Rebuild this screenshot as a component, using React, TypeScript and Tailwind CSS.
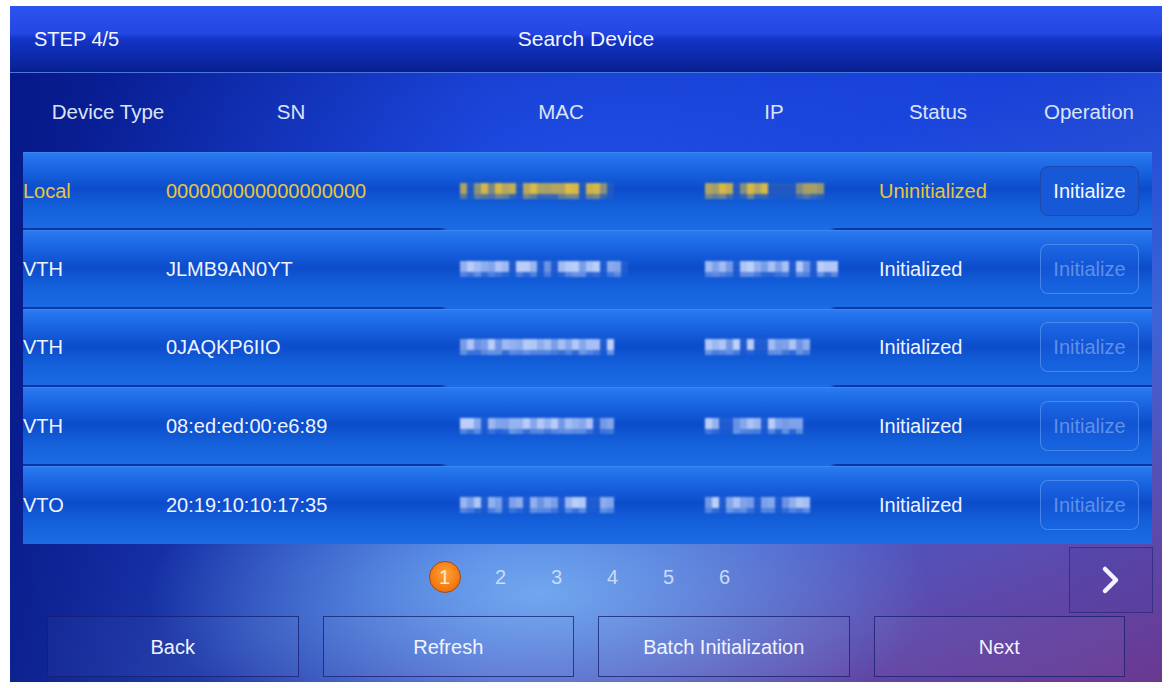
import React from "react";

const rnd = (s: number) => {
  const x = Math.sin(s * 12.9898 + 78.233) * 43758.5453;
  return x - Math.floor(x);
};

function Mosaic({ width, seed, rgb }: { width: number; seed: number; rgb: string }) {
  const n = Math.round(width / 7);
  const cells = Array.from({ length: n }, (_, i) => {
    const r = rnd(seed * 100 + i);
    const gap = r < 0.18;
    const op = gap ? 0.1 : 0.4 + r * 0.6;
    const op2 = gap ? 0.05 : 0.12 + rnd(seed * 300 + i) * 0.4;
    return { op, op2 };
  });
  return (
    <div className="flex flex-col blur-[0.8px]">
      <div className="flex">
        {cells.map((c, i) => (
          <div key={i} className="w-[7px] h-[11px]" style={{ backgroundColor: `rgba(${rgb},${c.op})` }} />
        ))}
      </div>
      <div className="flex">
        {cells.map((c, i) => (
          <div key={i} className="w-[7px] h-[5px]" style={{ backgroundColor: `rgba(${rgb},${c.op2})` }} />
        ))}
      </div>
    </div>
  );
}

type Row = {
  type: string;
  sn: string;
  mac: number;
  ip: number;
  status: string;
  local?: boolean;
};

const rows: Row[] = [
  { type: "Local", sn: "000000000000000000", mac: 152, ip: 117, status: "Uninitialized", local: true },
  { type: "VTH", sn: "JLMB9AN0YT", mac: 167, ip: 130, status: "Initialized" },
  { type: "VTH", sn: "0JAQKP6IIO", mac: 156, ip: 108, status: "Initialized" },
  { type: "VTH", sn: "08:ed:ed:00:e6:89", mac: 152, ip: 96, status: "Initialized" },
  { type: "VTO", sn: "20:19:10:10:17:35", mac: 152, ip: 107, status: "Initialized" },
];

export default function App() {
  return (
    <div className="w-[1172px] h-[688px] bg-white pt-[6px] pb-[6px] pl-[10px] pr-[10px] font-['Liberation_Sans',Arial,sans-serif] text-[20px]">
      <div className="relative w-full h-full flex flex-col overflow-hidden bg-[radial-gradient(ellipse_34%_24%_at_46%_87%,rgba(120,180,245,0.85),transparent),radial-gradient(ellipse_45%_40%_at_50%_25%,rgba(40,90,245,0.55),transparent),linear-gradient(to_right,rgba(6,22,130,0.85)_0%,rgba(6,22,130,0.3)_28%,transparent_42%),linear-gradient(160deg,#0b28ad_0%,#1740d6_40%,#3b64d8_66%,#5a4cb0_84%,#6a3890_100%)]">
        {/* title bar */}
        <div className="h-[67px] shrink-0 flex items-center px-[24px] border-b border-[#4a76e0] bg-[linear-gradient(to_bottom,#2c53f0_0%,#2446e2_42%,#1334c6_50%,#0b259e_88%,#081f8c_100%)] text-[#f2f6ff]">
          <div className="w-[200px]">STEP 4/5</div>
          <div className="flex-1 text-center pr-[200px] text-[21px]">Search Device</div>
        </div>
        {/* column header */}
        <div className="h-[79px] shrink-0 pl-[13px] grid grid-cols-[170px_196px_344px_82px_246px_56px] items-center text-[#dbe5fa] text-[20.5px]">
          {["Device Type", "SN", "MAC", "IP", "Status", "Operation"].map((h) => (
            <div key={h} className="flex justify-center whitespace-nowrap">
              {h}
            </div>
          ))}
        </div>
        {/* table */}
        <div className="h-[392px] shrink-0 pl-[13px] pr-[10px] grid grid-rows-5">
          {rows.map((r, i) => {
            const yellow = r.local ? "text-[#e8c53e]" : "text-[#eef3ff]";
            return (
              <div key={i} className="relative flex flex-col bg-[linear-gradient(to_bottom,#2a7af0_0%,#1a66e2_20%,#0c4ccb_47%,#1460da_70%,#1c6ce4_100%)] border-t border-[#3a86f2]">
                <div className="flex-1 grid grid-cols-[143px_294px_245px_174px_161px_1fr] items-center">
                  <div className={yellow}>{r.type}</div>
                  <div className={yellow}>{r.sn}</div>
                  <div>
                    <Mosaic width={r.mac} seed={i * 2 + 1} rgb={r.local ? "226,190,64" : "192,210,250"} />
                  </div>
                  <div>
                    <Mosaic width={r.ip} seed={i * 2 + 2} rgb={r.local ? "226,190,64" : "192,210,250"} />
                  </div>
                  <div className={yellow}>{r.status}</div>
                  <div>
                    {r.local ? (
                      <div className="w-[99px] h-[50px] rounded-[8px] border-[1.5px] border-[#1d48ad] bg-[#1658d6] flex items-center justify-center text-[#f4f7ff]">
                        Initialize
                      </div>
                    ) : (
                      <div className="w-[99px] h-[50px] rounded-[8px] border-[1.5px] border-[rgba(110,165,245,0.55)] bg-[rgba(30,100,230,0.35)] flex items-center justify-center text-[#5f90e8]">
                        Initialize
                      </div>
                    )}
                  </div>
                </div>
                {i < rows.length - 1 && (
                  <div className="h-[2px] shrink-0 bg-[linear-gradient(to_right,#0a36a6_0%,#0a36a6_37%,transparent_37.6%,transparent_71.5%,#0a36a6_72%,#0a36a6_100%)]" />
                )}
              </div>
            );
          })}
        </div>
        {/* pagination */}
        <div className="h-[72px] shrink-0 grid grid-cols-[1fr_auto_1fr] items-center pr-[9px]">
          <div />
          <div className="flex items-center pl-[6px] mb-[6px]">
            <div className="w-[56px] flex justify-center">
              <div className="w-[32px] h-[32px] rounded-full border-[1.5px] border-[#a9480e] bg-[radial-gradient(circle_at_50%_40%,#ffa238_0%,#f47c12_60%,#e06608_100%)] flex items-center justify-center text-[#ffecd4] text-[20px]">
                1
              </div>
            </div>
            {["2", "3", "4", "5", "6"].map((n) => (
              <div key={n} className="w-[56px] flex justify-center text-[#cadcf7] text-[20px]">
                {n}
              </div>
            ))}
          </div>
          <div className="flex justify-end">
            <div className="w-[84px] h-[66px] border border-[rgba(40,40,120,0.7)] bg-[rgba(70,60,160,0.25)] flex items-center justify-center">
              <svg width="22" height="30" viewBox="0 0 22 30" fill="none">
                <path d="M5 4 L16 15 L5 26" stroke="#f4f2ff" strokeWidth="4.5" strokeLinecap="round" strokeLinejoin="round" />
              </svg>
            </div>
          </div>
        </div>
        {/* bottom buttons */}
        <div className="h-[61px] shrink-0 px-[37px] flex gap-[24px]">
          {["Back", "Refresh", "Batch Initialization", "Next"].map((b) => (
            <div key={b} className="flex-1 border border-[rgba(20,30,110,0.75)] bg-[rgba(255,255,255,0.03)] flex items-center justify-center text-[#f0f4ff]">
              {b}
            </div>
          ))}
        </div>
      </div>
    </div>
  );
}
